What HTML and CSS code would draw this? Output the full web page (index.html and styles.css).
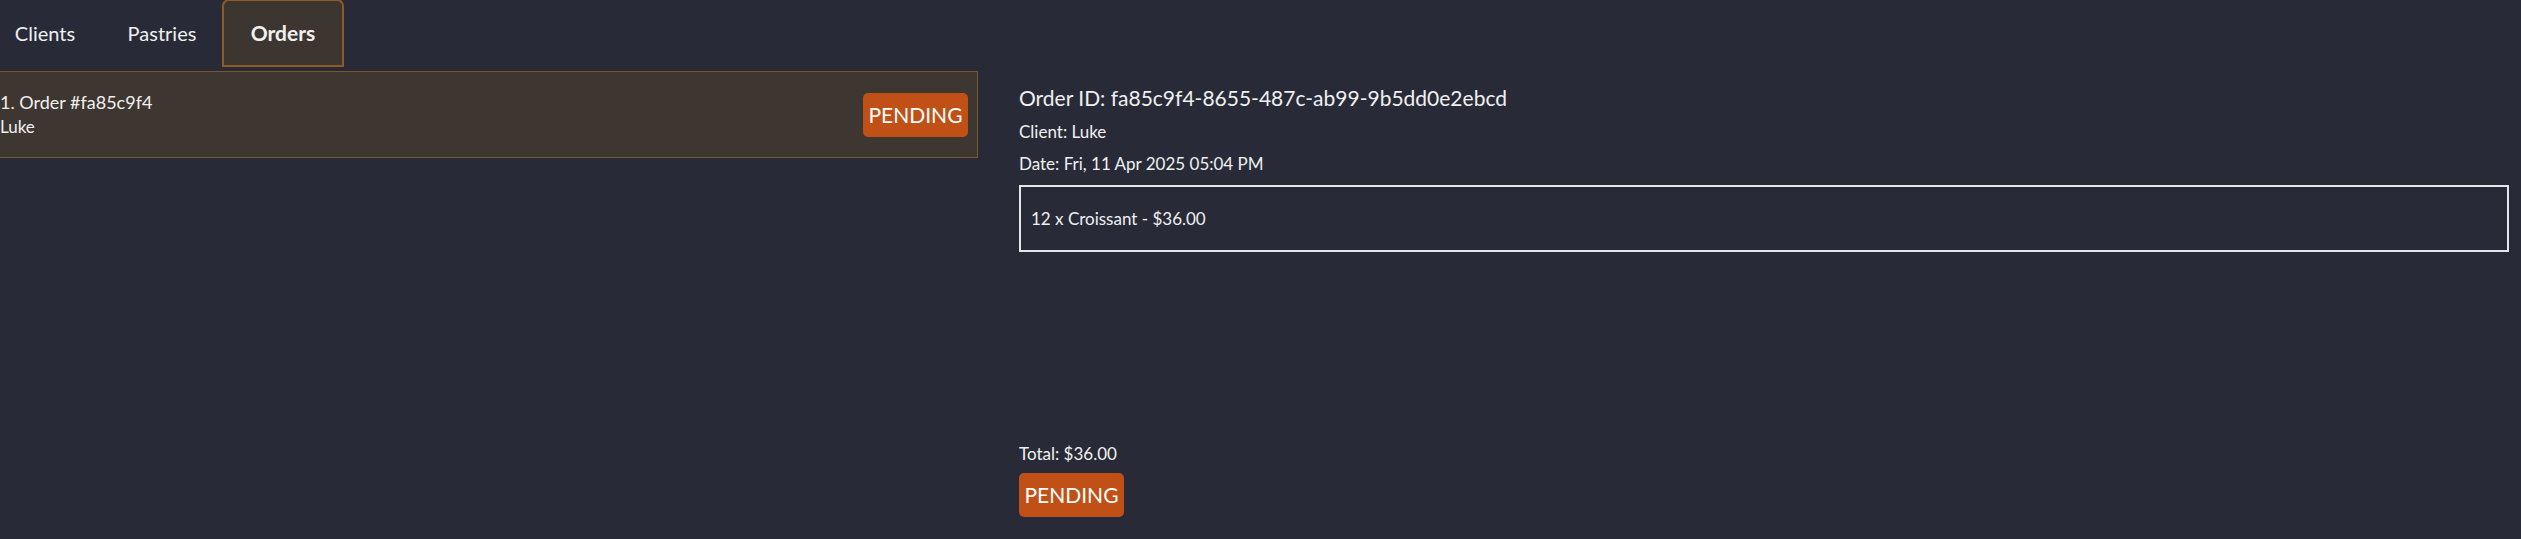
FILE: index.html
```html
<!DOCTYPE html>
<html>
<head>
<meta charset="utf-8">
<link rel="stylesheet" href="styles.css">
</head>
<body>
<div class="app">
  <nav class="tabs">
    <div class="tab">Clients</div>
    <div class="tab">Pastries</div>
    <div class="tab active">Orders</div>
  </nav>
  <main class="content">
    <section class="list">
      <div class="order-row">
        <div class="order-info">
          <div class="order-title">1. Order #fa85c9f4</div>
          <div class="order-client">Luke</div>
        </div>
        <span class="badge">PENDING</span>
      </div>
    </section>
    <section class="detail">
      <div class="detail-id">Order ID: fa85c9f4-8655-487c-ab99-9b5dd0e2ebcd</div>
      <div class="detail-line">Client: Luke</div>
      <div class="detail-line">Date: Fri, 11 Apr 2025 05:04 PM</div>
      <div class="items">
        <div class="item">12 x Croissant - $36.00</div>
      </div>
      <div class="footer">
        <div class="total">Total: $36.00</div>
        <span class="badge">PENDING</span>
      </div>
    </section>
  </main>
</div>
</body>
</html>
```
FILE: styles.css
```css
html, body {
  margin: 0;
  padding: 0;
  background: #282b37;
  color: #f0f0f0;
  font-family: "Lato", "Noto Sans", sans-serif;
  font-weight: 400;
}
.app {
  height: 539px;
  display: flex;
  flex-direction: column;
}
.tabs {
  display: flex;
  height: 67px;
  align-items: stretch;
  gap: 27px;
}
.tab {
  display: flex;
  align-items: center;
  justify-content: center;
  width: 90px;
  font-size: 20px;
  padding-bottom: 2px;
  box-sizing: border-box;
}
.tab.active {
  width: 122px;
  margin-left: -12px;
  background: #3d3530;
  border: 2px solid #8d5b25;
  border-radius: 7px 7px 0 0;
  font-weight: 700;
  font-size: 21px;
  margin-top: -1px;
}
.content {
  flex: 1;
  display: flex;
  margin-top: 4px;
}
.list {
  width: 978px;
}
.order-row {
  display: flex;
  align-items: center;
  justify-content: space-between;
  height: 87px;
  box-sizing: border-box;
  background: #3e3630;
  border: 1px solid #7d5529;
  border-left: none;
  padding: 0 9px 0 0;
}
.order-title {
  font-size: 18px;
  line-height: 25px;
}
.order-client {
  font-size: 17px;
  line-height: 24px;
}
.badge {
  display: inline-block;
  background: #c15016;
  color: #fff;
  font-size: 21px;
  border-radius: 5px;
  height: 44px;
  line-height: 44px;
  box-sizing: border-box;
  width: 105px;
  text-align: center;
}
.detail {
  flex: 1;
  display: flex;
  flex-direction: column;
  padding: 12px 12px 22px 41px;
}
.detail-id {
  font-size: 21px;
  line-height: 30px;
  margin-bottom: 3px;
}
.detail-line {
  font-size: 17px;
  line-height: 32px;
}
.items {
  margin-top: 5px;
  border: 2px solid #e6e6e6;
  height: 67px;
  box-sizing: border-box;
  display: flex;
  align-items: center;
  padding-left: 10px;
}
.item {
  font-size: 17px;
}
.footer {
  margin-top: auto;
  display: flex;
  flex-direction: column;
  align-items: flex-start;
}
.total {
  font-size: 17px;
  line-height: 26px;
  margin-bottom: 6px;
}
```
